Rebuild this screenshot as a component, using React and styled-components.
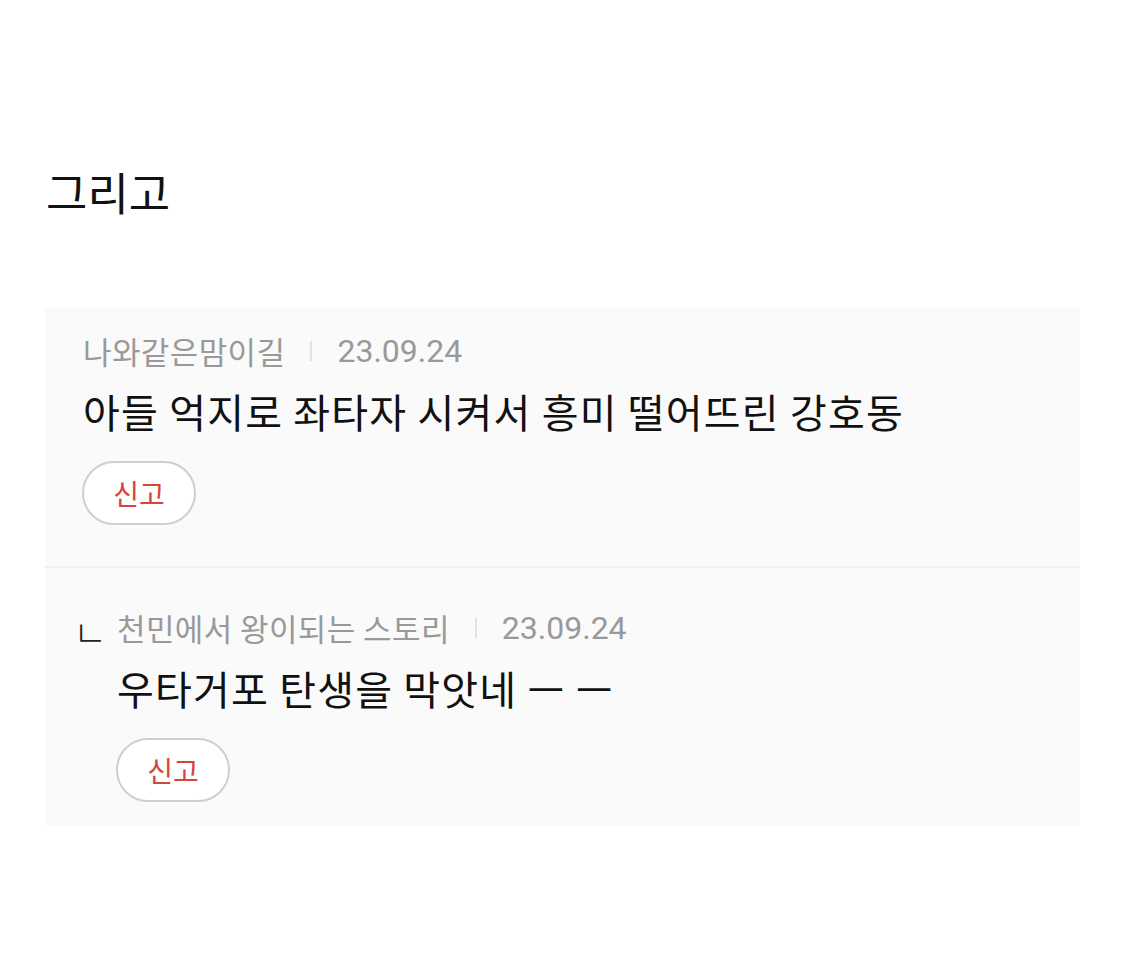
import styled, { createGlobalStyle } from 'styled-components';

const comments = [
  { id: 1, user: '나와같은맘이길', date: '23.09.24', text: '아들 억지로 좌타자 시켜서 흥미 떨어뜨린 강호동', reply: false },
  { id: 2, user: '천민에서 왕이되는 스토리', date: '23.09.24', text: '우타거포 탄생을 막앗네 ㅡ ㅡ', reply: true },
];

function App() {
  return (
    <>
      <GlobalStyle />
      <Page>
        <Heading>그리고</Heading>
        <Card>
          {comments.map(c => (
            <Comment key={c.id} reply={c.reply}>
              {c.reply && <ReplyMark>ㄴ</ReplyMark>}
              <Body>
                <Meta>
                  <User>{c.user}</User>
                  <Sep />
                  <Date>{c.date}</Date>
                </Meta>
                <Text>{c.text}</Text>
                <ReportButton>신고</ReportButton>
              </Body>
            </Comment>
          ))}
        </Card>
      </Page>
    </>
  );
}

const GlobalStyle = createGlobalStyle`
  body {
    margin: 0;
    background: #fff;
    font-family: "Noto Sans CJK KR", "Noto Sans", sans-serif;
  }
`;

const Page = styled.div`
  padding: 0 45px;
  height: 980px;
`;

const Heading = styled.h1`
  margin: 0;
  padding: 163px 0 0 1px;
  font-size: 45px;
  font-weight: 400;
  line-height: 58px;
  color: #111;
`;

const Card = styled.div`
  margin-top: 87px;
  background: #fafafa;
`;

const Comment = styled.div`
  display: flex;
  padding: ${p => (p.reply ? '45px 38px 24px 34px' : '28px 38px 41px 38px')};
  & + & {
    border-top: 2px solid #efefef;
  }
`;

const ReplyMark = styled.span`
  width: 44px;
  flex-shrink: 0;
  margin-left: -6px;
  padding-top: 3px;
  font-size: 37px;
  font-weight: 300;
  line-height: 30px;
  color: #222;
`;

const Body = styled.div`
  display: flex;
  flex-direction: column;
  align-items: flex-start;
`;

const Meta = styled.div`
  display: flex;
  align-items: center;
  gap: 25px;
  font-size: 31px;
  line-height: 30px;
  letter-spacing: 0.4px;
  color: #999;
`;

const User = styled.span``;

const Sep = styled.span`
  width: 2px;
  height: 20px;
  background: #e2e2e2;
`;

const Date = styled.span`
  font-family: "Roboto", "Noto Sans CJK KR", sans-serif;
  font-size: 32px;
  letter-spacing: 0;
`;

const Text = styled.div`
  margin-top: 21px;
  font-size: 40px;
  line-height: 48px;
  letter-spacing: 1.2px;
  color: #111;
`;

const ReportButton = styled.button`
  margin-top: 26px;
  margin-left: -1px;
  width: 114px;
  height: 64px;
  border: 2px solid #cfcfcf;
  border-radius: 32px;
  background: #fff;
  color: #d2473b;
  font-family: "Noto Sans CJK KR", sans-serif;
  font-size: 28px;
  line-height: 1;
  cursor: pointer;
`;

export default App;
